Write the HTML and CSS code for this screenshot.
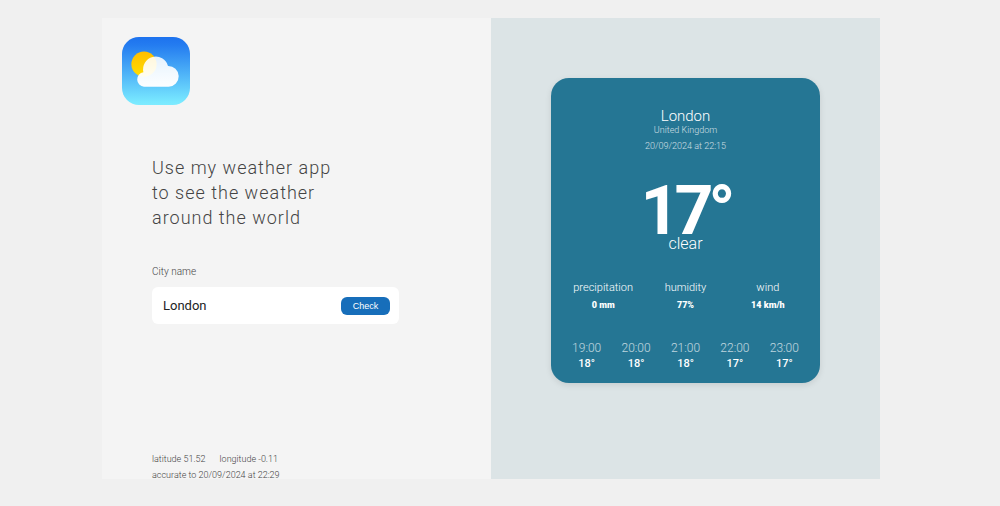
FILE: index.html
```html
<!DOCTYPE html>
<html lang="en">
<head>
<meta charset="utf-8">
<meta name="viewport" content="width=device-width, initial-scale=1">
<title>Weather app</title>
<link rel="stylesheet" href="styles.css">
</head>
<body>
<main class="app">
  <section class="search">
    <svg class="logo" viewBox="0 0 68 68" role="img" aria-label="Weather">
      <defs>
        <linearGradient id="sky" x1="0" y1="0" x2="0" y2="1">
          <stop offset="0" stop-color="#1d72ee"/>
          <stop offset="0.12" stop-color="#247cf0"/>
          <stop offset="0.95" stop-color="#78e8ff"/>
          <stop offset="1" stop-color="#7eebff"/>
        </linearGradient>
        <linearGradient id="sun" x1="0" y1="0" x2="0" y2="1">
          <stop offset="0" stop-color="#ffbe00"/>
          <stop offset="1" stop-color="#ffde00"/>
        </linearGradient>
        <linearGradient id="cloud" x1="0" y1="0" x2="0" y2="1">
          <stop offset="0" stop-color="#fff" stop-opacity="0.87"/>
          <stop offset="1" stop-color="#fff" stop-opacity="0.98"/>
        </linearGradient>
      </defs>
      <rect width="68" height="68" rx="17" fill="url(#sky)"/>
      <circle cx="22" cy="27.2" r="12.6" fill="url(#sun)"/>
      <path d="M22 49.700a7.300 7.300 0 0 1-.6-14.500A12.700 12.700 0 0 1 46 28.900A10.400 10.400 0 0 1 46.600 49.700z" fill="url(#cloud)"/>
    </svg>
    <div class="search-body">
      <h1 class="intro">Use my weather app<br>to see the weather<br>around the world</h1>
      <form class="city-form" onsubmit="return false">
        <label class="city-label" for="city">City name</label>
        <div class="city-field">
          <input class="city-input" id="city" type="text" value="London">
          <button class="check" type="submit">Check</button>
        </div>
      </form>
      <footer class="meta">
        <p class="coords"><span>latitude 51.52</span><span>longitude -0.11</span></p>
        <p>accurate to 20/09/2024 at 22:29</p>
      </footer>
    </div>
  </section>
  <section class="result">
    <article class="card">
      <header class="place">
        <h2 class="city">London</h2>
        <p class="country">United Kingdom</p>
        <p class="time">20/09/2024 at 22:15</p>
      </header>
      <div class="now">
        <p class="temp">17<span class="degree">°</span></p>
        <p class="condition">clear</p>
      </div>
      <dl class="details">
        <div><dt>precipitation</dt><dd>0 mm</dd></div>
        <div><dt>humidity</dt><dd>77%</dd></div>
        <div><dt>wind</dt><dd>14 km/h</dd></div>
      </dl>
      <ol class="hours">
        <li><time>19:00</time><span>18°</span></li>
        <li><time>20:00</time><span>18°</span></li>
        <li><time>21:00</time><span>18°</span></li>
        <li><time>22:00</time><span>17°</span></li>
        <li><time>23:00</time><span>17°</span></li>
      </ol>
    </article>
  </section>
</main>
</body>
</html>
```
FILE: styles.css
```css
* { box-sizing: border-box; }

body {
  margin: 0;
  padding: 18px 120px 27px 102px;
  min-height: 100vh;
  display: flex;
  background: #f0f0f0;
  font-family: Roboto, "Liberation Sans", sans-serif;
  font-weight: 300;
}

h1, h2, p, dl, dd, ol {
  margin: 0;
  padding: 0;
  font-weight: inherit;
}

.app {
  flex: 1;
  display: grid;
  grid-template-columns: 1fr 1fr;
}

.search {
  display: flex;
  flex-direction: column;
  padding: 19px 20px 0;
  background: #f4f4f4;
}

.logo {
  width: 68px;
  height: 68px;
}

.search-body {
  flex: 1;
  display: flex;
  flex-direction: column;
  padding: 50px 72px 0 30px;
}

.intro {
  font-size: 18px;
  line-height: 25px;
  letter-spacing: 1px;
  color: #444;
}

.city-form { margin-top: 34px; }

.city-label {
  display: block;
  font-size: 10px;
  line-height: 16px;
  color: #444;
}

.city-field {
  display: flex;
  align-items: center;
  margin-top: 7px;
  padding: 9px;
  padding-left: 11px;
  border-radius: 6px;
  background: #fff;
}

.city-input {
  flex: 1;
  min-width: 0;
  height: 19px;
  padding: 0;
  border: 0;
  outline: 0;
  background: none;
  font: 13px Roboto, "Liberation Sans", sans-serif;
  color: #222;
}

.check {
  width: 49px;
  height: 18px;
  padding: 0;
  border: 0;
  border-radius: 6px;
  background: #176eba;
  color: #fff;
  font: 9px "Liberation Sans", Arial, sans-serif;
}

.meta {
  margin-top: auto;
  margin-bottom: -4px;
  font-size: 9px;
  line-height: 16px;
  color: #444;
}

.coords {
  display: flex;
  gap: 14px;
}

.result {
  padding: 60px;
  background: #dce4e6;
}

.card {
  display: flex;
  flex-direction: column;
  padding: 30px 11px 11px;
  border-radius: 18px;
  background: #257694;
  box-shadow: 0 2px 6px rgba(0, 0, 0, 0.1);
  color: #fff;
  text-align: center;
}

.city {
  font-size: 15px;
  line-height: 17px;
}

.country, .time {
  font-size: 9px;
  line-height: 11px;
  opacity: 0.75;
}

.time { margin-top: 5px; }

.temp {
  margin-top: 25px;
  font-size: 68px;
  line-height: 68px;
  font-weight: 700;
  letter-spacing: -5px;
}

.degree { font-weight: 900; }

.condition {
  margin-top: -10px;
  font-size: 16px;
  line-height: 18px;
}

.details {
  display: grid;
  grid-template-columns: repeat(3, 1fr);
  margin-top: 27px;
}

.details dt {
  font-size: 11px;
  line-height: 16px;
}

.details dd {
  margin-top: 2px;
  font-size: 9px;
  line-height: 14px;
  font-weight: 900;
}

.hours {
  display: grid;
  grid-template-columns: repeat(5, 1fr);
  margin-top: 28px;
  list-style: none;
  line-height: 16px;
}

.hours time {
  display: block;
  font-size: 12px;
  opacity: 0.7;
}

.hours span {
  display: block;
  font-size: 11px;
  font-weight: 500;
}
```
